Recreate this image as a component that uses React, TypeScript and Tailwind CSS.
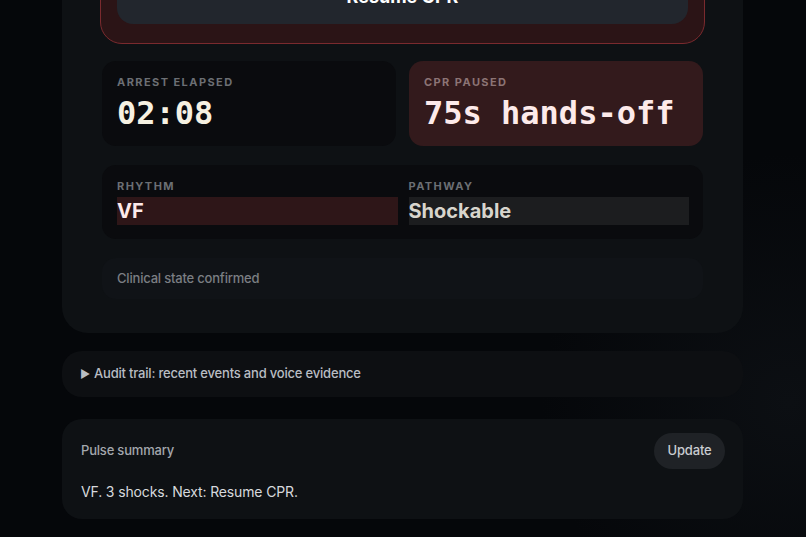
import React from "react";

export default function App() {
  return (
    <div
      className="min-h-[537px] w-full overflow-hidden bg-[#05070a] bg-[radial-gradient(circle_at_98%_72%,#0c0f13_0%,#05070a_28%)] pb-10"
      style={{ fontFamily: 'Inter, "Noto Sans", sans-serif' }}
    >
      <div className="-mt-[93px] ml-[62px] flex w-[681px] flex-col pt-5">
        {/* Main card */}
        <div className="rounded-[26px] bg-[#0e1114] px-[38px] pb-[34px] pt-6">
          <div className="rounded-[22px] border-[1.5px] border-[#7a2a2e] bg-[#2b1416] px-4 pb-[19px] pt-4">
            <button className="flex h-14 w-full items-center justify-center rounded-[16px] bg-[#22262d] text-[18px] font-bold text-white">
              Resume CPR
            </button>
          </div>

          <div className="mt-[17px] grid grid-cols-2 gap-[13px] px-[2px]">
            <div className="flex h-[85px] flex-col rounded-[14px] bg-[#0a0b0e] px-[15px] pt-[14px]">
              <div className="text-[11px] font-bold leading-[14px] tracking-[0.13em] text-[#6c6f74]">
                ARREST ELAPSED
              </div>
              <div
                className="mt-[5px] text-[32px] font-bold leading-[38px] text-[#f6f1e2]"
                style={{ fontFamily: '"DejaVu Sans Mono", monospace' }}
              >
                02:08
              </div>
            </div>
            <div className="flex h-[85px] flex-col rounded-[14px] bg-[#331a1c] px-[15px] pt-[14px]">
              <div className="text-[11px] font-bold leading-[14px] tracking-[0.13em] text-[#8c7475]">
                CPR PAUSED
              </div>
              <div
                className="mt-[5px] text-[32px] font-bold leading-[38px] text-[#fdeaea]"
                style={{ fontFamily: '"DejaVu Sans Mono", monospace' }}
              >
                75s hands‑off
              </div>
            </div>
          </div>

          <div className="mx-[2px] mt-[19px] grid grid-cols-2 gap-[11px] rounded-[14px] bg-[#0a0b0e] pb-[14px] pl-[15px] pr-[14px] pt-[14px]">
            <div className="flex flex-col">
              <div className="text-[11px] font-bold leading-[14px] tracking-[0.13em] text-[#6c6f74]">
                RHYTHM
              </div>
              <div className="mt-[4px] flex h-[28px] items-center bg-[#2e1618] text-[20px] font-bold text-[#fdeaea]">
                VF
              </div>
            </div>
            <div className="flex flex-col">
              <div className="text-[11px] font-bold leading-[14px] tracking-[0.13em] text-[#6c6f74]">
                PATHWAY
              </div>
              <div className="mt-[4px] flex h-[28px] items-center bg-[#1c1d1f] text-[20px] font-bold text-[#d8d5cd]">
                Shockable
              </div>
            </div>
          </div>

          <div className="mx-[2px] mt-[19px] flex h-[41px] items-center rounded-[14px] bg-[#101317] px-[15px] text-[13px] font-medium tracking-[-0.015em] text-[#7b7e83]">
            Clinical state confirmed
          </div>
        </div>

        {/* Audit trail */}
        <div className="mt-[18px] flex h-[46px] items-center gap-[4px] rounded-[20px] bg-[#0d0f12] pl-[18px] pr-[19px] text-[13px] font-medium tracking-[-0.015em] text-[#b9bdc3]">
          <span className="text-[11px] leading-none text-[#b9bdc3]">▶</span>
          <span>Audit trail: recent events and voice evidence</span>
        </div>

        {/* Pulse summary */}
        <div className="mt-[22px] flex h-[100px] flex-col rounded-[20px] bg-[#0e1114] pl-[19px] pr-[18px] pt-[14px]">
          <div className="flex items-center justify-between">
            <span className="text-[13px] font-medium tracking-[-0.015em] text-[#a3a7ad]">Pulse summary</span>
            <button className="flex h-[36px] w-[71px] items-center justify-center rounded-full bg-[#1f2226] text-[13px] font-medium tracking-[-0.015em] text-[#c9ccd1]">
              Update
            </button>
          </div>
          <div className="mt-[13px] text-[14px] leading-[20px] tracking-[-0.01em] text-[#d7d9dd]">
            VF. 3 shocks. Next: Resume CPR.
          </div>
        </div>
      </div>
    </div>
  );
}
